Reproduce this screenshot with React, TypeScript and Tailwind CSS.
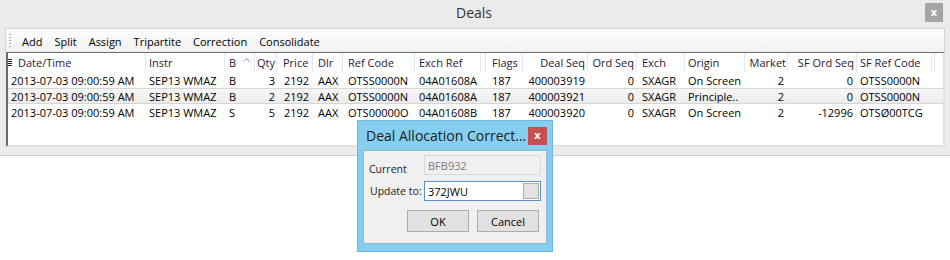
import React from 'react';

type Col = {
  key: string;
  label: string;
  w: string;
  head: string;
  cell: string;
  right?: boolean;
};

const cols: Col[] = [
  { key: 'dt', label: 'Date/Time', w: 'w-[138px]', head: 'pl-[10px]', cell: 'pl-[3px]' },
  { key: 'instr', label: 'Instr', w: 'w-[79px]', head: 'pl-[3px]', cell: 'pl-[3px]' },
  { key: 'b', label: 'B', w: 'w-[30px]', head: 'pl-[4px]', cell: 'pl-[4px]' },
  { key: 'qty', label: 'Qty', w: 'w-[22px]', head: 'justify-end pr-[1px]', cell: 'justify-end pr-[2px]', right: true },
  { key: 'price', label: 'Price', w: 'w-[36px]', head: 'pl-[6px]', cell: 'pl-[7px]' },
  { key: 'dlr', label: 'Dlr', w: 'w-[30px]', head: 'pl-[5px]', cell: 'pl-[5px]' },
  { key: 'ref', label: 'Ref Code', w: 'w-[72px]', head: 'pl-[5px]', cell: 'pl-[5px]' },
  { key: 'exref', label: 'Exch Ref', w: 'w-[66px]', head: 'pl-[4px]', cell: 'pl-[4px]' },
  { key: 'gap1', label: '', w: 'w-[5px]', head: '', cell: '' },
  { key: 'flags', label: 'Flags', w: 'w-[37px]', head: 'pl-[6px]', cell: 'pl-[6px]' },
  { key: 'deal', label: 'Deal Seq', w: 'w-[65px]', head: 'justify-end pr-[2px]', cell: 'justify-end pr-[3px]', right: true },
  { key: 'ord', label: 'Ord Seq', w: 'w-[49px]', head: 'justify-end pr-[2px]', cell: 'justify-end pr-[3px]', right: true },
  { key: 'exch', label: 'Exch', w: 'w-[48px]', head: 'pl-[5px]', cell: 'pl-[5px]' },
  { key: 'origin', label: 'Origin', w: 'w-[60px]', head: 'pl-[3px]', cell: 'pl-[3px]' },
  { key: 'market', label: 'Market', w: 'w-[43px]', head: 'justify-end pr-[1px]', cell: 'justify-end pr-[4px]', right: true },
  { key: 'sford', label: 'SF Ord Seq', w: 'w-[69px]', head: 'justify-end pr-[2px]', cell: 'justify-end pr-[4px]', right: true },
  { key: 'sfref', label: 'SF Ref Code', w: 'w-[75px]', head: 'pl-[3px]', cell: 'pl-[3px]' },
  { key: 'gap2', label: '', w: 'w-[3px]', head: '', cell: '' },
];

const rows: Record<string, string>[] = [
  {
    dt: '2013-07-03 09:00:59 AM', instr: 'SEP13 WMAZ', b: 'B', qty: '3', price: '2192', dlr: 'AAX',
    ref: 'OTSS0000N', exref: '04A01608A', flags: '187', deal: '400003919', ord: '0', exch: 'SXAGR',
    origin: 'On Screen', market: '2', sford: '0', sfref: 'OTSS0000N',
  },
  {
    dt: '2013-07-03 09:00:59 AM', instr: 'SEP13 WMAZ', b: 'B', qty: '2', price: '2192', dlr: 'AAX',
    ref: 'OTSS0000N', exref: '04A01608A', flags: '187', deal: '400003921', ord: '0', exch: 'SXAGR',
    origin: 'Principle..', market: '2', sford: '0', sfref: 'OTSS0000N',
  },
  {
    dt: '2013-07-03 09:00:59 AM', instr: 'SEP13 WMAZ', b: 'S', qty: '5', price: '2192', dlr: 'AAX',
    ref: 'OTS00000O', exref: '04A01608B', flags: '187', deal: '400003920', ord: '0', exch: 'SXAGR',
    origin: 'On Screen', market: '2', sford: '-12996', sfref: 'OTSØ00TCG',
  },
];

const toolbarItems = ['Add', 'Split', 'Assign', 'Tripartite', 'Correction', 'Consolidate'];

function GripDots() {
  return (
    <div className="flex flex-col gap-[2px] w-[2px] mr-[5px]">
      {[0, 1, 2, 3, 4].map((i) => (
        <span key={i} className="block w-[2px] h-[1px] bg-[#a8a8a8]" />
      ))}
    </div>
  );
}

function HeaderRow() {
  return (
    <div className="flex h-[19px] text-[#2a1838]">
      {cols.map((c) => (
        <div
          key={c.key}
          className={`${c.w} ${c.head} shrink-0 flex items-center border-r border-[#e1e9f3] whitespace-nowrap overflow-hidden relative`}
        >
          {c.key === 'dt' && (
            <svg width="4" height="7" viewBox="0 0 4 7" className="absolute left-[0px] top-[6px]">
              <rect x="0" y="0" width="4" height="1" fill="#222" />
              <rect x="0" y="2" width="4" height="1" fill="#222" />
              <rect x="0" y="4" width="4" height="1" fill="#222" />
              <rect x="0" y="6" width="4" height="1" fill="#222" />
            </svg>
          )}
          {c.label}
          {c.key === 'b' && (
            <svg width="7" height="4" viewBox="0 0 7 4" className="ml-[7px] mb-[6px]">
              <path d="M0.5 3.5 L3.5 0.5 L6.5 3.5" fill="none" stroke="#6f93bd" strokeWidth="1" />
            </svg>
          )}
        </div>
      ))}
    </div>
  );
}

function DealRow({ row, selected }: { row: Record<string, string>; selected?: boolean }) {
  return (
    <div
      className={`flex h-[16px] text-black ${
        selected ? 'bg-gradient-to-b from-[#f7f7f7] to-[#ececec] border-y border-[#d6d6d6]' : ''
      }`}
    >
      {cols.map((c) => (
        <div
          key={c.key}
          className={`${c.w} ${c.cell} shrink-0 flex items-center whitespace-nowrap overflow-hidden`}
        >
          {row[c.key] ?? ''}
        </div>
      ))}
    </div>
  );
}

function CorrectionDialog() {
  return (
    <div className="absolute left-[357px] top-[120px] w-[196px] h-[132px] bg-[#85cef0] border border-[#6db9df] flex flex-col px-[5px] pb-[7px]">
      <div className="h-[29px] flex items-center justify-between pl-[3px]">
        <span className="text-[14px] text-[#1b1b1b] whitespace-nowrap">Deal Allocation Correct...</span>
        <div className="w-[19px] h-[18px] bg-[#c75050] text-white text-[11px] font-bold flex items-center justify-center leading-none pb-[2px]">
          x
        </div>
      </div>
      <div className="flex-1 bg-[#f0f0f0] border border-[#97b5ca] px-[5px] pt-[4px]">
        <div className="flex items-center h-[20px]">
          <span className="w-[55px] shrink-0 whitespace-nowrap text-[10.5px] text-[#1b1b1b] pt-[8px]">Current</span>
          <div className="w-[121px] h-[20px] border border-[#d9d9d9] bg-[#f0f0f0] flex items-center pl-[3px] text-[11px] text-[#7a7a7a]">
            BFB932
          </div>
        </div>
        <div className="flex items-center h-[20px] mt-[6px]">
          <span className="w-[55px] shrink-0 whitespace-nowrap text-[10.5px] text-[#1b1b1b] pl-[1px]">Update to:</span>
          <div className="w-[121px] h-[20px] border border-[#5a93c9] bg-white flex items-center justify-between pl-[3px] pr-[1px] text-[11px] text-black">
            372JWU
            <span className="w-[16px] h-[16px] bg-[#e3e3e3] border border-[#adadad]" />
          </div>
        </div>
        <div className="flex justify-end gap-[8px] mt-[9px] pr-[2px]">
          <button className="w-[62px] h-[22px] bg-[#e1e1e1] border border-[#adadad] text-[11px] text-black">OK</button>
          <button className="w-[62px] h-[22px] bg-[#e1e1e1] border border-[#adadad] text-[11px] text-black">Cancel</button>
        </div>
      </div>
    </div>
  );
}

export default function App() {
  return (
    <div className="relative w-[950px] h-[260px] bg-white overflow-hidden font-['Open_Sans',sans-serif] text-[11px] leading-none">
      <div className="bg-[#ebebeb] border-b border-[#d2d2d2] px-[5px] pb-[8px]">
        {/* Title bar */}
        <div className="h-[28px] flex items-center">
          <div className="flex-1" />
          <span className="text-[14px] text-[#333] pb-[2px]">Deals</span>
          <div className="flex-1 flex justify-end pb-[3px] pr-[2px]">
            <div className="w-[18px] h-[19px] bg-[#a5a5a5] text-white text-[11px] font-bold flex items-center justify-center pb-[2px]">
              x
            </div>
          </div>
        </div>

        {/* Toolbar */}
        <div className="h-[24px] flex items-center bg-gradient-to-b from-[#fdfdfd] to-[#f1f1f1] border border-b-0 border-[#d5d5d5] pl-[3px] text-black">
          <GripDots />
          {toolbarItems.map((item) => (
            <span key={item} className="px-[6px] whitespace-nowrap pt-[1px]">
              {item}
            </span>
          ))}
        </div>

        {/* Grid */}
        <div className="ml-[1px] h-[95px] bg-white border-t border-l-2 border-t-[#6b6b6b] border-l-[#6b6b6b] border-r-2 border-b-2 border-r-[#e2e2e2] border-b-[#e2e2e2]">
          <HeaderRow />
          {rows.map((r, i) => (
            <DealRow key={i} row={r} selected={i === 1} />
          ))}
        </div>
      </div>

      <CorrectionDialog />
    </div>
  );
}
